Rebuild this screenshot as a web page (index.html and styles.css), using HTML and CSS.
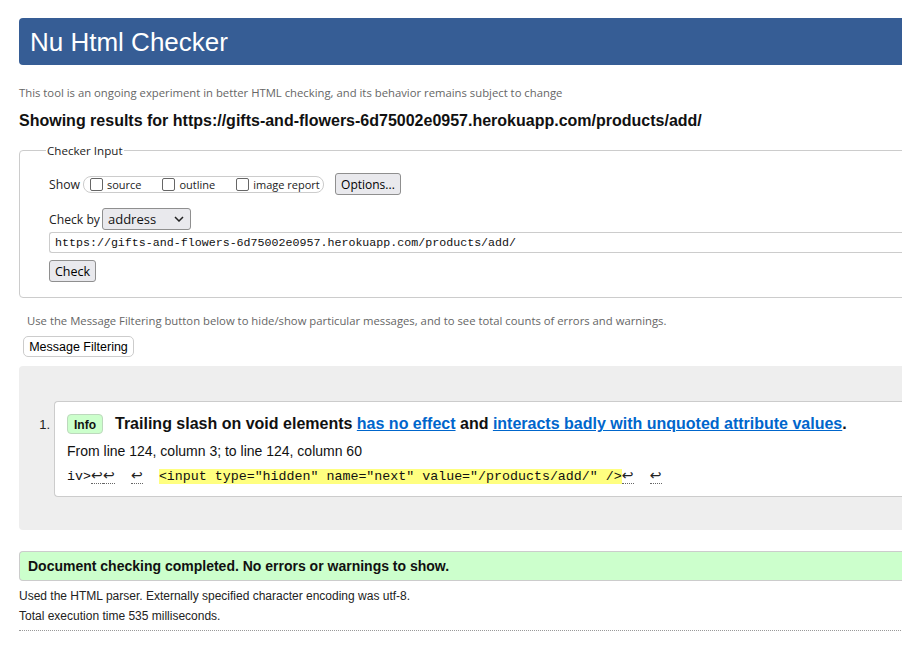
FILE: index.html
```html
<!DOCTYPE html>
<html>
<head>
<meta charset="utf-8">
<link rel="stylesheet" href="styles.css">
</head>
<body>
<div class="page">
  <h1 class="header">Nu Html Checker</h1>
  <p class="intro">This tool is an ongoing experiment in better HTML checking, and its behavior remains subject to change</p>
  <p class="showing">Showing results for https://gifts-and-flowers-6d75002e0957.herokuapp.com/products/add/</p>

  <fieldset class="checker">
    <legend class="legend">Checker Input</legend>
    <div class="row show-row">
      <span class="label">Show</span>
      <span class="opts">
        <span class="opt"><span class="cb"></span>source</span>
        <span class="opt"><span class="cb"></span>outline</span>
        <span class="opt"><span class="cb"></span>image report</span>
      </span>
      <span class="btn options">Options...</span>
    </div>
    <div class="row by-row">
      <span class="label">Check by</span>
      <span class="select">address<svg class="chev" width="10" height="6" viewBox="0 0 10 6"><path d="M1 1 L5 5 L9 1" fill="none" stroke="#222" stroke-width="1.5"/></svg></span>
    </div>
    <div class="url">https://gifts-and-flowers-6d75002e0957.herokuapp.com/products/add/</div>
    <span class="btn check">Check</span>
  </fieldset>

  <p class="filter-note">Use the Message Filtering button below to hide/show particular messages, and to see total counts of errors and warnings.</p>
  <span class="btn filter">Message Filtering</span>

  <div class="results">
    <ol class="msgs">
      <li class="msg">
        <span class="num">1.</span>
        <div class="box">
          <p class="title"><span class="badge">Info</span><strong>Trailing slash on void elements <a href="#">has no effect</a> and <a href="#">interacts badly with unquoted attribute values</a>.</strong></p>
          <p class="loc">From line 124, column 3; to line 124, column 60</p>
          <p class="extract"><code>iv&gt;<span class="lf">↩</span><span class="lf">↩</span>  <span class="lf">↩</span>  <mark class="hl">&lt;input type="hidden" name="next" value="/products/add/" /&gt;</mark><span class="lf">↩</span>  <span class="lf">↩</span></code></p>
        </div>
      </li>
    </ol>
  </div>

  <p class="success">Document checking completed. No errors or warnings to show.</p>
  <p class="details first">Used the HTML parser. Externally specified character encoding was utf-8.</p>
  <p class="details">Total execution time 535 milliseconds.</p>
  <div class="dotted"></div>
</div>
</body>
</html>
```

FILE: styles.css
```css
html, body {
  margin: 0;
  padding: 0;
  overflow: hidden;
  background: #fff;
}
body {
  font-family: "Liberation Sans", Arial, sans-serif;
  color: #111;
}
.page {
  width: 1100px;
  padding: 18px 0 0 19px;
}
.header {
  margin: 0;
  height: 47px;
  background: #365d95;
  color: #fff;
  font-weight: normal;
  font-size: 26px;
  line-height: 48px;
  padding-left: 11px;
  border-radius: 4px 0 0 4px;
}
.intro {
  margin: 20px 0 0;
  font-family: "Open Sans", sans-serif;
  font-size: 11.3px;
  line-height: 16px;
  color: #666;
}
.showing {
  margin: 10px 0 0;
  font-weight: bold;
  font-size: 16px;
  line-height: 20px;
  color: #111;
}
.checker {
  margin: 12px 0 0;
  border: 1px solid #ccc;
  border-radius: 4px;
  padding: 14px 0 15px 29px;
  height: 124px;
  box-sizing: content-box;
  font-family: "Open Sans", sans-serif;
}
.legend {
  margin-left: -3px;
  padding: 0 1px;
  font-size: 11.6px;
  color: #222;
}
.row {
  display: flex;
  align-items: center;
}
.label {
  font-size: 12.2px;
  color: #222;
}
.show-row {
  height: 24px;
}
.opts {
  display: flex;
  align-items: center;
  margin-left: 3px;
  height: 17px;
  width: 241px;
  border: 1px solid #ccc;
  border-radius: 8px;
  padding-left: 6px;
  box-sizing: border-box;
}
.opt {
  display: flex;
  align-items: center;
  font-size: 11px;
  color: #222;
  margin-right: 21px;
}
.opt:last-child { margin-right: 0; }
.cb {
  width: 11px;
  height: 11px;
  border: 1px solid #666;
  border-radius: 2px;
  margin-right: 4px;
  background: #fff;
}
.btn {
  display: inline-flex;
  align-items: center;
  justify-content: center;
  box-sizing: border-box;
  border: 1px solid #8f8f8f;
  border-radius: 3px;
  background: #e9e9ed;
  color: #000;
  font-size: 12px;
}
.options {
  margin-left: 11px;
  width: 66px;
  height: 22px;
  font-family: "Open Sans", sans-serif;
}
.by-row {
  margin-top: 12px;
  height: 22px;
}
.select {
  margin-left: 2px;
  width: 89px;
  height: 22px;
  box-sizing: border-box;
  border: 1px solid #8f8f8f;
  border-radius: 3px;
  background: #e9e9ed;
  font-size: 13px;
  padding-left: 5px;
  display: flex;
  align-items: center;
  justify-content: space-between;
  padding-right: 6px;
  color: #111;
}
.url {
  margin-top: 2px;
  height: 21px;
  box-sizing: border-box;
  border: 1px solid #ccc;
  border-right: none;
  border-radius: 3px 0 0 3px;
  font-family: "Liberation Mono", monospace;
  font-size: 11.65px;
  line-height: 19px;
  padding-left: 5px;
  color: #111;
}
.check {
  margin-top: 7px;
  width: 47px;
  height: 22px;
  font-family: "Open Sans", sans-serif;
  font-size: 12.5px;
}
.filter-note {
  margin: 15px 0 0 8px;
  font-family: "Open Sans", sans-serif;
  font-size: 11.3px;
  line-height: 16px;
  color: #666;
}
.filter {
  margin: 7px 0 0 4px;
  width: 111px;
  height: 21px;
  border-color: #ccc;
  background: #fff;
  border-radius: 5px;
  font-size: 12.5px;
}
.results {
  margin-top: 9px;
  background: #eee;
  border-radius: 4px 0 0 4px;
  height: 164px;
  box-sizing: border-box;
  padding-top: 35px;
}
.msgs {
  list-style: none;
  margin: 0;
  padding: 0;
}
.msg {
  display: flex;
  align-items: flex-start;
}
.num {
  width: 35px;
  text-align: right;
  padding-right: 4px;
  font-size: 13px;
  padding-top: 16px;
  color: #222;
  box-sizing: border-box;
}
.box {
  flex: 1;
  background: #fff;
  border: 1px solid #ccc;
  border-right: none;
  border-radius: 4px 0 0 4px;
  height: 96px;
  box-sizing: border-box;
  padding: 12px 0 0 12px;
}
.title {
  margin: 0;
  display: flex;
  align-items: center;
  font-size: 16px;
  line-height: 20px;
}
.badge {
  display: inline-block;
  background: #ccffcc;
  border: 1px solid #bdd9bd;
  border-radius: 4px;
  font-size: 12px;
  font-weight: bold;
  height: 20px;
  line-height: 20px;
  box-sizing: border-box;
  padding: 0 6px;
  margin-right: 12px;
  color: #111;
}
.title a {
  color: #0066cc;
}
.loc {
  margin: 9px 0 0;
  font-size: 14px;
  line-height: 16px;
}
.extract {
  margin: 8px 0 0;
  font-family: "Liberation Mono", monospace;
  font-size: 13.3px;
  line-height: 18px;
  white-space: pre;
}
.extract code { font-family: "Liberation Mono", monospace; }
.lf {
  display: inline-block;
  width: 12px;
  text-align: center;
  font-family: "DejaVu Sans", sans-serif;
  font-size: 14px;
  line-height: 16px;
  border-bottom: 1px dotted #666;
  color: #222;
}
.hl {
  background: #ffff80;
  color: #111;
}
.success {
  margin: 21px 0 0;
  background: #ccffcc;
  border: 1px solid #ccc;
  border-right: none;
  border-radius: 4px 0 0 4px;
  height: 30px;
  box-sizing: border-box;
  line-height: 28px;
  padding-left: 8px;
  font-weight: bold;
  font-size: 14px;
}
.details {
  margin: 4px 0 0;
  font-size: 12px;
  line-height: 16px;
  color: #222;
}
.details.first {
  margin-top: 7px;
}
.dotted {
  margin-top: 6px;
  border-top: 1px dotted #999;
}
```
